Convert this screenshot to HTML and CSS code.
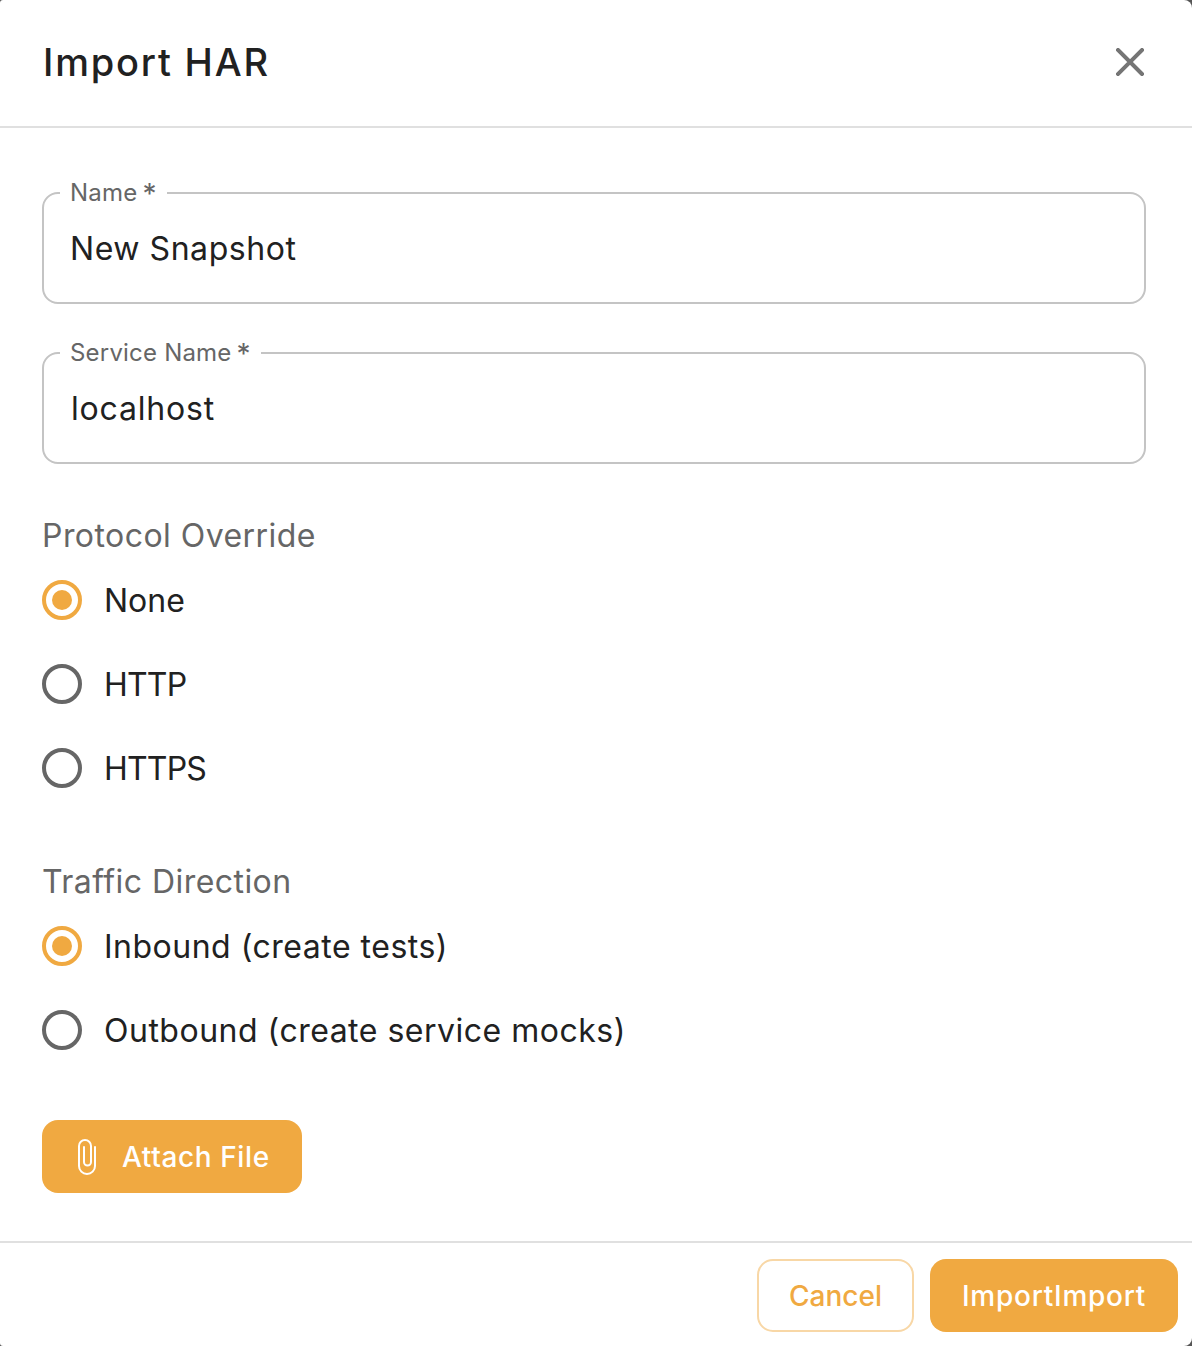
FILE: index.html
```html
<!DOCTYPE html>
<html lang="en">
<head>
<meta charset="utf-8">
<title>Import HAR</title>
<link rel="stylesheet" href="styles.css">
</head>
<body>
<div class="dialog">
  <header class="dialog-header">
    <h2 class="dialog-title">Import HAR</h2>
    <button class="close-btn" type="button" aria-label="Close">
      <svg viewBox="0 0 28 28" width="28" height="28"><path d="M2 2L26 26M26 2L2 26" fill="none" stroke="#757575" stroke-width="4" stroke-linecap="square"/></svg>
    </button>
  </header>
  <main class="dialog-body">
    <fieldset class="field">
      <legend class="field-label">Name<span class="req">*</span></legend>
      <div class="field-value">New Snapshot</div>
    </fieldset>
    <fieldset class="field field-second">
      <legend class="field-label">Service Name<span class="req">*</span></legend>
      <div class="field-value">localhost</div>
    </fieldset>
    <section class="group group-protocol">
      <div class="group-label">Protocol Override</div>
      <div class="radio"><span class="radio-mark checked"></span><span class="radio-text tight-none">None</span></div>
      <div class="radio"><span class="radio-mark"></span><span class="radio-text tight-caps">HTTP</span></div>
      <div class="radio"><span class="radio-mark"></span><span class="radio-text tight-caps">HTTPS</span></div>
    </section>
    <section class="group group-traffic">
      <div class="group-label">Traffic Direction</div>
      <div class="radio"><span class="radio-mark checked"></span><span class="radio-text">Inbound (create tests)</span></div>
      <div class="radio"><span class="radio-mark"></span><span class="radio-text">Outbound (create service mocks)</span></div>
    </section>
    <button class="btn btn-solid btn-attach" type="button">
      <svg class="clip" viewBox="0 0 18 36" width="18" height="36"><path d="M17 8V27a8 8 0 0 1-16 0V7a6 6 0 0 1 12 0V23a3.5 3.5 0 0 1-7 0V8" fill="none" stroke="#fff" stroke-width="2" stroke-linecap="round"/></svg>
      <span>Attach File</span>
    </button>
  </main>
  <footer class="dialog-footer">
    <button class="btn btn-outline" type="button">Cancel</button>
    <button class="btn btn-solid btn-import" type="button">ImportImport</button>
  </footer>
</div>
</body>
</html>
```
FILE: styles.css
```css
* { box-sizing: border-box; }
html, body { margin: 0; height: 100%; }
body {
  background: #555;
  font-family: "Inter", "Open Sans", sans-serif;
  color: #212121;
}
.dialog {
  width: 1192px;
  height: 1346px;
  background: #fff;
  border-radius: 3px 8px 8px 3px;
  display: flex;
  flex-direction: column;
  overflow: hidden;
}
.dialog-header {
  height: 128px;
  flex: none;
  border-bottom: 2px solid #e0e0e0;
  padding: 0 48px 2px 43px;
  display: flex;
  align-items: center;
  justify-content: space-between;
}
.dialog-title {
  margin: 0;
  font-size: 38px;
  font-weight: 500;
  letter-spacing: 1.8px;
  color: #212121;
}
.close-btn {
  border: 0;
  padding: 0;
  background: none;
  width: 28px;
  height: 28px;
  display: flex;
}
.dialog-body {
  flex: 1;
  padding: 53px 46px 0 42px;
}
.field {
  margin: 0;
  padding: 0 26px;
  height: 123px;
  border: 2px solid #c4c4c4;
  border-radius: 16px;
  min-width: 0;
}
.field-second { margin-top: 37px; }
.field-label {
  padding: 0 10px;
  margin-left: -10px;
  font-size: 24px;
  line-height: 24px;
  letter-spacing: 0.2px;
  color: #666;
}
.req {
  font-size: 28px;
  line-height: 0;
  margin-left: 5px;
  vertical-align: -3px;
}
.field-value {
  font-size: 32px;
  line-height: 40px;
  letter-spacing: 0.55px;
  padding-top: 24px;
}
.field-second .field-value {
  letter-spacing: 0.8px;
  padding-left: 1px;
}
.group-label {
  font-size: 32px;
  line-height: 40px;
  letter-spacing: 0.45px;
  color: #666;
}
.group-protocol { margin-top: 52px; }
.group-traffic { margin-top: 52px; }
.radio {
  height: 84px;
  display: flex;
  align-items: center;
  gap: 22px;
}
.group-label + .radio { margin-top: 2px; }
.radio-mark {
  width: 40px;
  height: 40px;
  border-radius: 50%;
  border: 4px solid #666;
  flex: none;
  display: flex;
  align-items: center;
  justify-content: center;
}
.radio-mark.checked { border-color: #f0a941; }
.radio-mark.checked::after {
  content: "";
  width: 20px;
  height: 20px;
  border-radius: 50%;
  background: #f0a941;
}
.radio-text {
  font-size: 32px;
  line-height: 40px;
  letter-spacing: 0.5px;
  padding-top: 2px;
}
.radio-text.tight-none { letter-spacing: 0; }
.radio-text.tight-caps { letter-spacing: -0.8px; }
.btn {
  height: 73px;
  border-radius: 16px;
  font-family: inherit;
  font-size: 28px;
  font-weight: 500;
  padding: 0;
  display: inline-flex;
  align-items: center;
  justify-content: center;
}
.btn-solid {
  background: #f0a941;
  border: 0;
  color: #fff;
}
.btn-attach {
  width: 260px;
  margin-top: 48px;
  gap: 26px;
  justify-content: flex-start;
  padding-left: 36px;
  letter-spacing: 0.6px;
}
.clip { flex: none; }
.dialog-footer {
  height: 105px;
  flex: none;
  border-top: 2px solid #e0e0e0;
  padding: 16px 14px 0 0;
  display: flex;
  justify-content: flex-end;
  gap: 16px;
}
.btn-outline {
  width: 157px;
  background: #fff;
  border: 2px solid #f8d7a6;
  color: #f0a941;
}
.btn-import { width: 248px; letter-spacing: 0.75px; }
```
